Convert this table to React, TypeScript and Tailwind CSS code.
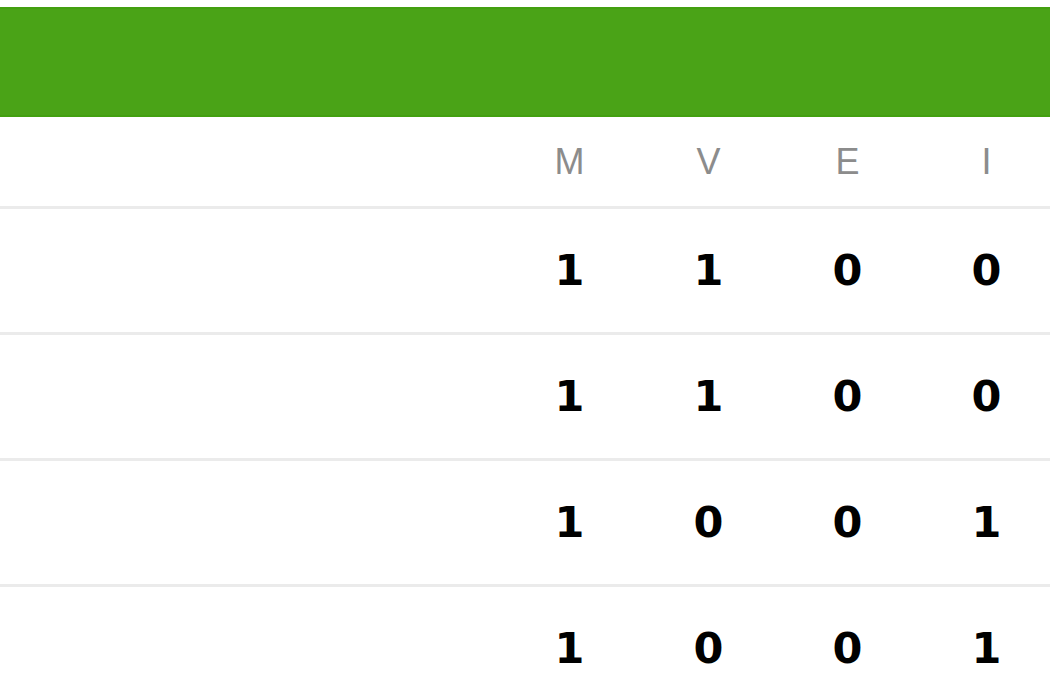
export default function App() {
  const rows = [
    [1, 1, 0, 0],
    [1, 1, 0, 0],
    [1, 0, 0, 1],
    [1, 0, 0, 1],
  ];
  const heads = ["M", "V", "E", "I"];

  return (
    <div className="w-[1050px] h-[700px] overflow-hidden bg-white">
      <div className="w-[1056px] pt-[7px]">
        <div className="h-[110px] bg-[#4aa317] border-y-2 border-[#43a010]"></div>

        <div className="flex h-[92px] items-center border-b-[3px] border-[#ebebeb] font-['Liberation_Sans',Arial,sans-serif] text-[36px] text-[#8c8c8c]">
          <div className="flex-1"></div>
          {heads.map((h) => (
            <div key={h} className="w-[139px] text-center">
              {h}
            </div>
          ))}
        </div>

        {rows.map((r, i) => (
          <div
            key={i}
            className="flex h-[126px] items-center border-b-[3px] border-[#ebebeb] font-['DejaVu_Sans',Verdana,sans-serif] font-bold text-[43px] text-black"
          >
            <div className="flex-1"></div>
            {r.map((v, j) => (
              <div key={j} className="w-[139px] text-center">
                {v}
              </div>
            ))}
          </div>
        ))}
      </div>
    </div>
  );
}
